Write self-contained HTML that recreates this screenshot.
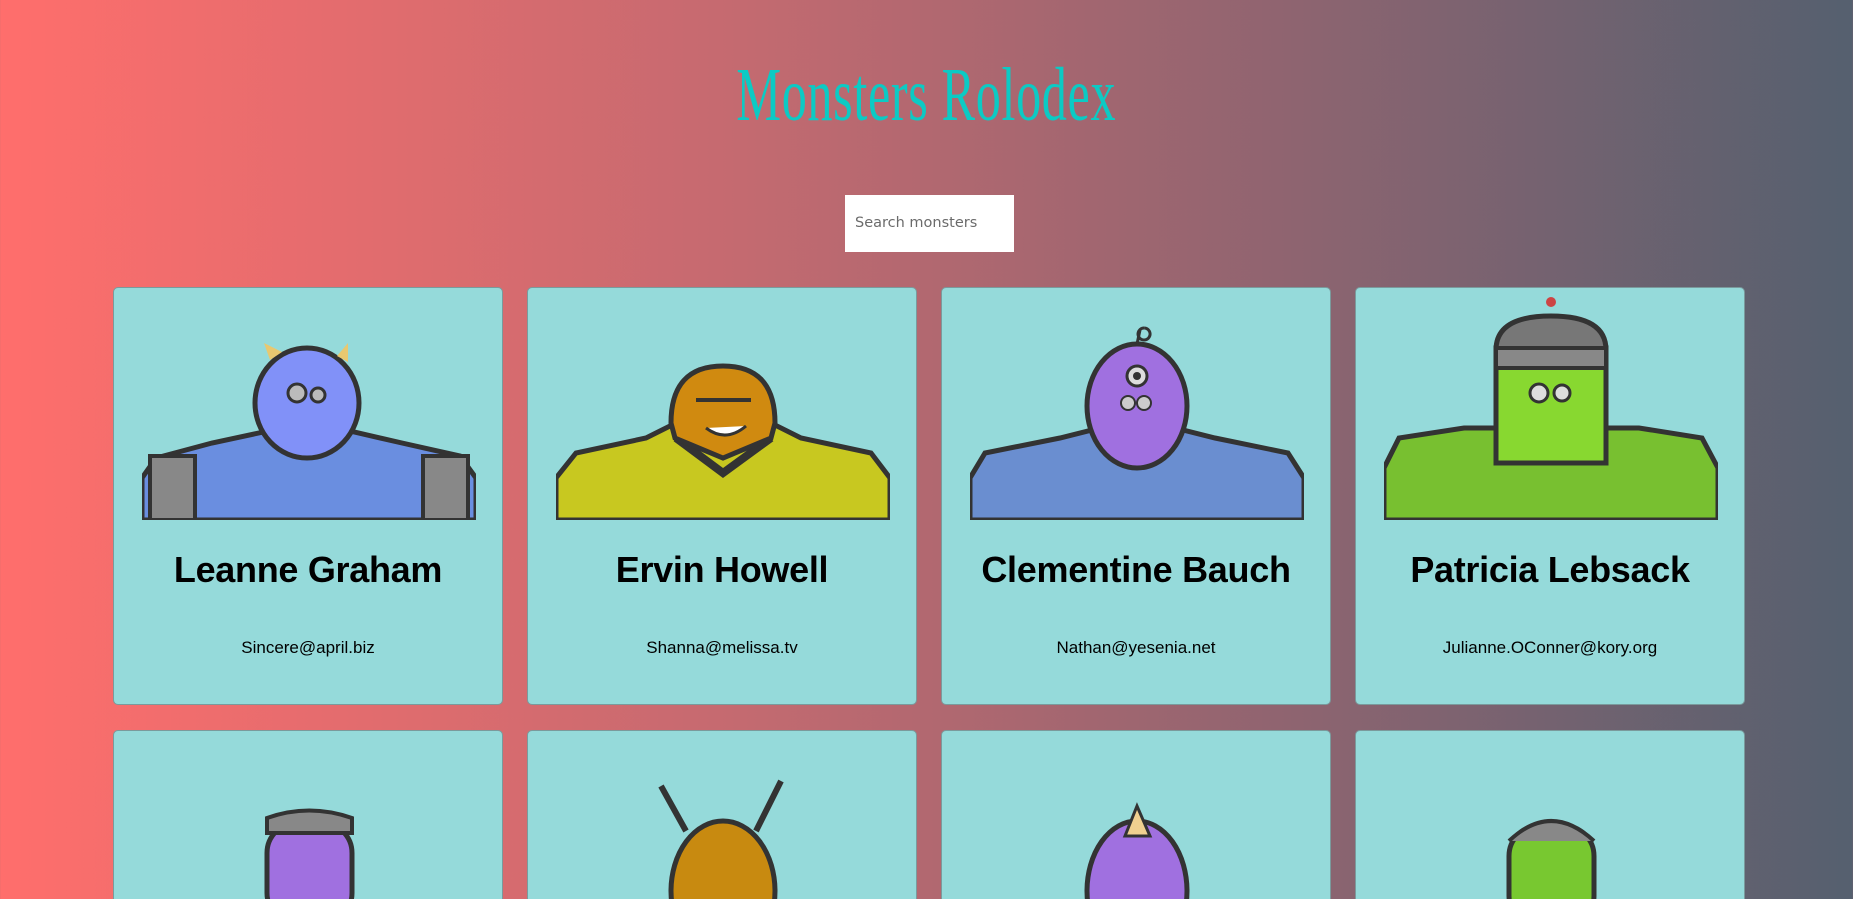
<!DOCTYPE html>
<html><head><meta charset="utf-8">
<style>
html,body{margin:0;padding:0;width:1853px;height:899px;overflow:hidden}
body{background:linear-gradient(to right,#ff6e6c 0%,#c46a70 40%,#8e6470 70%,#55606f 100%);font-family:"Liberation Sans",sans-serif;position:relative}
h1{position:absolute;left:0;width:1853px;top:52px;margin:0;text-align:center;color:#0ccac4;font-family:"Liberation Serif",serif;font-weight:normal;font-size:76px;letter-spacing:1px;transform:scaleX(0.66);transform-origin:926px 0}
.search{position:absolute;left:845px;top:195px;width:169px;height:57px;background:#fff;box-sizing:border-box;padding-left:10px;line-height:57px;font-size:14.5px;color:#6b6b6b;font-family:"DejaVu Sans",sans-serif}
.card{position:absolute;width:388px;height:416px;background:#95dada;border:1px solid #7a9a9c;border-radius:5px;overflow:hidden}
.card svg{position:absolute;left:28px;top:0}
.card h2{position:absolute;top:261px;left:0;width:100%;margin:0;text-align:center;font-size:36px;font-weight:bold;color:#000;font-family:"Liberation Sans",sans-serif;letter-spacing:-0.3px}
.card p{position:absolute;top:350px;left:0;width:100%;margin:0;text-align:center;font-size:17px;color:#000}
</style></head><body>
<h1>Monsters Rolodex</h1>
<div class="search">Search monsters</div>

<div class="card" style="left:113px;top:287px">
<svg width="334" height="232" viewBox="0 0 334 232">
<path d="M0 232 L0 190 L14 170 L70 155 L140 140 L195 140 L260 155 L318 168 L334 190 L334 232Z" fill="#6a8ee0" stroke="#333" stroke-width="5"/>
<rect x="8" y="168" width="45" height="64" fill="#888" stroke="#333" stroke-width="4"/>
<rect x="281" y="168" width="45" height="64" fill="#888" stroke="#333" stroke-width="4"/>
<ellipse cx="165" cy="115" rx="52" ry="55" fill="#8191f8" stroke="#333" stroke-width="5"/>
<path d="M128 72 L122 55 L140 64Z" fill="#e8c870"/><path d="M195 68 L206 55 L206 74Z" fill="#e8c870"/>
<circle cx="155" cy="105" r="9" fill="#bbb" stroke="#333" stroke-width="3"/><circle cx="176" cy="107" r="7" fill="#bbb" stroke="#333" stroke-width="3"/>
</svg>
<h2>Leanne Graham</h2><p>Sincere@april.biz</p></div>

<div class="card" style="left:527px;top:287px">
<svg width="334" height="232" viewBox="0 0 334 232">
<path d="M0 232 L0 190 L20 165 L90 150 L130 130 L205 130 L245 150 L315 165 L334 190 L334 232Z" fill="#c8c820" stroke="#333" stroke-width="5"/>
<path d="M120 150 L167 185 L215 150" fill="none" stroke="#333" stroke-width="8"/>
<path d="M115 135 Q115 78 167 78 Q219 78 219 135 L215 150 L167 170 L119 150Z" fill="#d08a10" stroke="#333" stroke-width="5"/>
<path d="M140 112 L195 112" stroke="#333" stroke-width="4"/><path d="M150 140 Q170 155 190 138" fill="#fff" stroke="#333" stroke-width="3"/>
</svg>
<h2>Ervin Howell</h2><p>Shanna@melissa.tv</p></div>

<div class="card" style="left:941px;top:287px">
<svg width="334" height="232" viewBox="0 0 334 232">
<path d="M0 232 L0 190 L15 165 L90 150 L130 140 L205 140 L245 150 L318 165 L334 190 L334 232Z" fill="#6a8ed0" stroke="#333" stroke-width="5"/>
<ellipse cx="167" cy="118" rx="50" ry="62" fill="#a070e0" stroke="#333" stroke-width="5"/>
<circle cx="167" cy="88" r="10" fill="#ddd" stroke="#333" stroke-width="3"/><circle cx="167" cy="88" r="4" fill="#333"/>
<circle cx="158" cy="115" r="7" fill="#ccc" stroke="#333" stroke-width="2"/><circle cx="174" cy="115" r="7" fill="#ccc" stroke="#333" stroke-width="2"/>
<path d="M167 56 L170 42 M174 40 a6 6 0 1 0 0.1 0" stroke="#333" stroke-width="3" fill="none"/>
</svg>
<h2>Clementine Bauch</h2><p>Nathan@yesenia.net</p></div>

<div class="card" style="left:1355px;top:287px">
<svg width="334" height="232" viewBox="0 0 334 232">
<path d="M0 232 L0 180 L15 150 L80 140 L255 140 L318 150 L334 180 L334 232Z" fill="#78c030" stroke="#333" stroke-width="5"/>
<rect x="112" y="60" width="110" height="115" fill="#88d830" stroke="#333" stroke-width="5"/>
<path d="M112 62 Q112 28 167 28 Q222 28 222 62Z" fill="#777" stroke="#333" stroke-width="5"/>
<rect x="112" y="60" width="110" height="20" fill="#888" stroke="#333" stroke-width="4"/>
<circle cx="167" cy="14" r="5" fill="#c44"/>
<circle cx="155" cy="105" r="9" fill="#ddd" stroke="#333" stroke-width="3"/><circle cx="178" cy="105" r="8" fill="#ddd" stroke="#333" stroke-width="3"/>
</svg>
<h2>Patricia Lebsack</h2><p>Julianne.OConner@kory.org</p></div>

<div class="card" style="left:113px;top:730px">
<svg width="334" height="232" viewBox="0 0 334 232"><rect x="125" y="92" width="85" height="100" rx="30" fill="#a070e0" stroke="#333" stroke-width="5"/><path d="M125 102 L125 87 Q167 72 210 87 L210 102Z" fill="#888" stroke="#333" stroke-width="4"/></svg></div>
<div class="card" style="left:527px;top:730px">
<svg width="334" height="232" viewBox="0 0 334 232"><ellipse cx="167" cy="160" rx="52" ry="70" fill="#c88a10" stroke="#333" stroke-width="5"/><path d="M130 100 L105 55 M200 100 L225 50" stroke="#333" stroke-width="6"/></svg></div>
<div class="card" style="left:941px;top:730px">
<svg width="334" height="232" viewBox="0 0 334 232"><ellipse cx="167" cy="160" rx="50" ry="70" fill="#a070e0" stroke="#333" stroke-width="5"/><path d="M155 105 L167 75 L180 105Z" fill="#f0d090" stroke="#333" stroke-width="3"/></svg></div>
<div class="card" style="left:1355px;top:730px">
<svg width="334" height="232" viewBox="0 0 334 232"><rect x="125" y="95" width="85" height="100" rx="30" fill="#78c830" stroke="#333" stroke-width="5"/><path d="M125 110 Q167 70 210 110" fill="#888" stroke="#333" stroke-width="4"/></svg></div>
</body></html>
